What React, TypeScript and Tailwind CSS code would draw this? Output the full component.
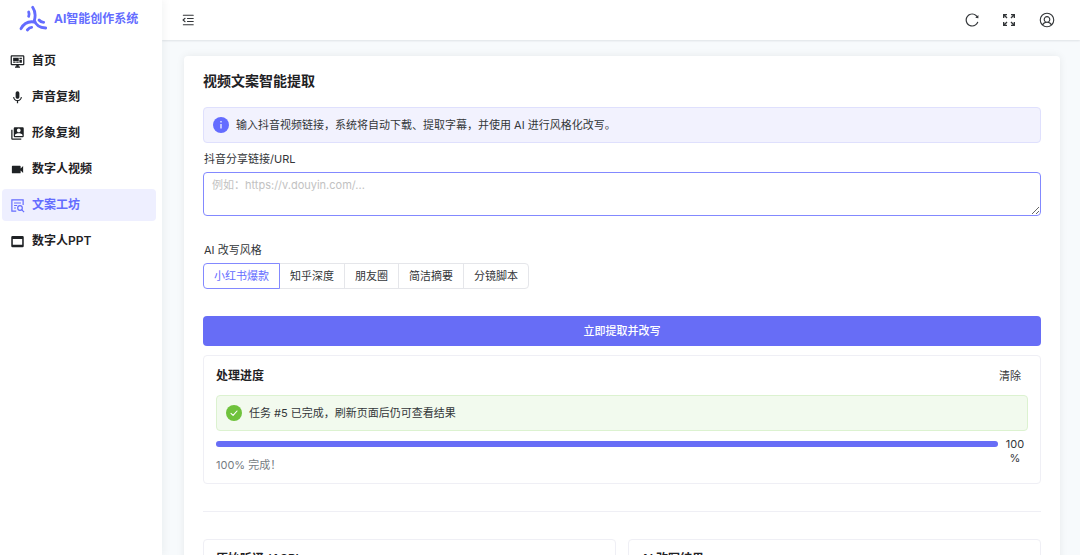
import React, { useState } from 'react';
import { MdMic, MdSwitchAccount, MdVideocam } from 'react-icons/md';
import { AiOutlineReload } from 'react-icons/ai';
import { PiUserCircle } from 'react-icons/pi';
import clsx from 'clsx';

function Logo() {
  return (
    <svg viewBox="0 0 84 84" className="w-7 h-7 shrink-0" fill="none" stroke="#646cff" strokeWidth="8.500" strokeLinecap="round" aria-hidden="true">
      <path d="M41 7c8 12 9 26 5 39 4 13 17 22 34 23" />
      <path d="M46 51C29 48 14 56 6 71" />
      <path d="M29 21c2 5 2 9 0 13" />
      <path d="M60 45c4 5 8 7 14 7" />
      <path d="M25 75c4-5 8-8 13-8" />
    </svg>
  );
}

function MonitorIcon() {
  return (
    <svg viewBox="0 0 24 24" width="15" height="15" fill="currentColor" aria-hidden="true">
      <path d="M21 16V4H3v12h18m0-14a2 2 0 0 1 2 2v12a2 2 0 0 1-2 2h-7v2h2v2H8v-2h2v-2H3a2 2 0 0 1-2-2V4c0-1.110.89-2 2-2h18M5 6h9v5H5V6m10 0h4v2h-4V6m4 3v5h-4V9h4M5 12h4v2H5v-2m5 0h4v2h-4v-2Z" />
    </svg>
  );
}

function DocSearchIcon() {
  return (
    <svg viewBox="0 0 24 24" width="15" height="15" fill="none" stroke="currentColor" strokeWidth="1.900" aria-hidden="true">
      <path d="M10 21H3V3h18v8M6.500 8h11M6.500 12h5M6.500 16h3" />
      <circle cx="16" cy="16" r="3.700" />
      <path d="m18.700 18.700 3.800 3.800" />
    </svg>
  );
}

function WindowIcon() {
  return (
    <svg viewBox="0 0 24 24" width="15" height="15" fill="currentColor" aria-hidden="true">
      <path fillRule="evenodd" d="M4 3h16a2 2 0 0 1 2 2v14a2 2 0 0 1-2 2H4a2 2 0 0 1-2-2V5a2 2 0 0 1 2-2Zm.500 5v9h15V8h-15Z" />
    </svg>
  );
}

function FoldIcon() {
  return (
    <svg viewBox="0 0 24 24" width="14" height="14" fill="none" stroke="currentColor" strokeWidth="1.800" strokeLinecap="round" aria-hidden="true">
      <path d="M4 4h17M11 9.300h10M11 14.700h10M4 20h17M7 9l-3.500 3L7 15" />
    </svg>
  );
}

function FullscreenIcon() {
  return (
    <svg viewBox="0 0 24 24" width="16" height="16" fill="currentColor" aria-hidden="true">
      <path d="M21 3v6h-2V6.410l-3.290 3.300-1.420-1.420L17.590 5H15V3zM3 3v6h2V6.410l3.290 3.300 1.420-1.420L6.410 5H9V3zm18 18v-6h-2v2.590l-3.290-3.290-1.410 1.410L17.590 19H15v2zM9 21v-2H6.410l3.290-3.290-1.410-1.420L5 17.590V15H3v6z" />
    </svg>
  );
}

const menus = [
  { label: '首页', icon: <MonitorIcon /> },
  { label: '声音复刻', icon: <MdMic size={15} /> },
  { label: '形象复刻', icon: <MdSwitchAccount size={15} /> },
  { label: '数字人视频', icon: <MdVideocam size={15} /> },
  { label: '文案工坊', icon: <DocSearchIcon /> },
  { label: '数字人PPT', icon: <WindowIcon /> },
];

const styles = ['小红书爆款', '知乎深度', '朋友圈', '简洁摘要', '分镜脚本'];

interface AlertProps {
  type: 'info' | 'success';
  children: React.ReactNode;
}

function Alert({ type, children }: AlertProps) {
  const isInfo = type === 'info';
  return (
    <div className={clsx('flex items-center gap-[7px] h-9 px-2 rounded border', isInfo ? 'bg-[#f2f2fe] border-[#dfe0fd]' : 'bg-[#f2faee] border-[#dcf2d0]')}>
      <svg viewBox="0 0 16 16" width="16" height="16" className="shrink-0 ml-px" fill="none" stroke="white" aria-hidden="true">
        <circle cx="8" cy="8" r="8" fill={isInfo ? '#646cff' : '#6fc23c'} stroke="none" />
        {isInfo ? (
          <path d="M8 7v4.600M8 4v1.400" strokeWidth="1.200" />
        ) : (
          <path d="m5 8.300 2.100 2L11 6" strokeWidth="1.100" strokeLinecap="round" strokeLinejoin="round" />
        )}
      </svg>
      <p>{children}</p>
    </div>
  );
}

export default function App() {
  const [active, setActive] = useState('文案工坊');
  const [style, setStyle] = useState(styles[0]);
  const [url, setUrl] = useState('');
  const progress = 100;

  return (
    <div className="flex h-screen overflow-hidden bg-[#f7fafc] text-[11px] leading-4 text-[#333639] font-[Inter,'Noto_Sans_CJK_SC',sans-serif]">
      <aside className="w-[162px] shrink-0 bg-white z-10 shadow-[2px_0_8px_rgba(29,35,41,0.05)]">
        <a href="#" className="flex items-center gap-[7px] h-[38px] pl-[19px] text-[#646cff] text-xs font-bold">
          <Logo />
          <span className="whitespace-nowrap">AI智能创作系统</span>
        </a>
        <nav className="flex flex-col gap-1 mt-[7px] pl-0.5 pr-1.5">
          {menus.map((menu) => (
            <a
              key={menu.label}
              href="#"
              onClick={() => setActive(menu.label)}
              aria-current={active === menu.label ? 'page' : undefined}
              className={clsx(
                'flex items-center gap-[7px] h-8 pl-2 rounded text-xs font-semibold',
                active === menu.label ? 'bg-[#eeefff] text-[#646cff]' : 'text-[#1f2225]'
              )}
            >
              {menu.icon}
              <span>{menu.label}</span>
            </a>
          ))}
        </nav>
      </aside>

      <div className="flex-1 min-w-0 flex flex-col">
        <header className="h-10 shrink-0 flex items-center justify-between bg-white pl-[19px] pr-6 shadow-[0_1px_2px_rgba(0,21,41,0.1)]">
          <button aria-label="折叠菜单"><FoldIcon /></button>
          <div className="flex items-center gap-[21px]">
            <button aria-label="刷新"><AiOutlineReload size={16} /></button>
            <button aria-label="全屏"><FullscreenIcon /></button>
            <button aria-label="用户"><PiUserCircle size={18} /></button>
          </div>
        </header>

        <main className="flex-1 overflow-y-auto [scrollbar-width:none] pl-[22px] pr-5 py-4">
          <div className="bg-white rounded shadow-[0_0_8px_rgba(0,0,0,0.07)] px-[19px] pt-[15px] pb-5">
            <h1 className="text-sm leading-5 font-semibold text-[#1f2225] mb-4">视频文案智能提取</h1>

            <Alert type="info">输入抖音视频链接，系统将自动下载、提取字幕，并使用 AI 进行风格化改写。</Alert>

            <label htmlFor="url" className="block mt-2 mb-[5px] pl-px">抖音分享链接/URL</label>
            <textarea
              id="url"
              value={url}
              onChange={(e) => setUrl(e.target.value)}
              placeholder="例如：https://v.douyin.com/..."
              className="block w-full h-11 px-2 py-1 rounded border border-[#8389ff] outline-none placeholder:text-[#c2c2c2]"
            />

            <fieldset className="mt-[26px]">
              <legend className="pl-px mb-[5px]">AI 改写风格</legend>
              <div className="flex">
                {styles.map((item) => (
                  <label
                    key={item}
                    className={clsx(
                      'flex items-center h-[26px] px-2.5 border -ml-px first:ml-0 first:rounded-l last:rounded-r cursor-pointer',
                      style === item ? 'relative border-[#8389ff] text-[#646cff]' : 'border-[#e5e6ea]'
                    )}
                  >
                    <input type="radio" name="style" className="sr-only" checked={style === item} onChange={() => setStyle(item)} />
                    {item}
                  </label>
                ))}
              </div>
            </fieldset>

            <button className="w-full h-[30px] mt-[27px] rounded bg-[#676df6] text-white font-medium">立即提取并改写</button>

            <section className="mt-[9px] px-3 pt-3 pb-2.5 rounded border border-[#efeff5]">
              <div className="flex items-center justify-between mb-[11px]">
                <h2 className="text-xs leading-4 font-semibold text-[#1f2225]">处理进度</h2>
                <button className="px-[7px]">清除</button>
              </div>
              <Alert type="success">任务 #5 已完成，刷新页面后仍可查看结果</Alert>
              <div className="flex items-start mt-1.5">
                <div className="flex-1 mt-1 h-1.5 rounded-full bg-[#ededf5]" role="progressbar" aria-valuenow={progress} aria-label="处理进度">
                  <div className="h-full rounded-full bg-[#676df6]" style={{ width: `${progress}%` }} />
                </div>
                <div className="w-[30px] pl-1 text-center leading-[14px]">
                  {progress}
                  <br />%
                </div>
              </div>
              <p className="-mt-2 text-[#767c82]">100% 完成！</p>
            </section>

            <hr className="my-[27px] border-[#efeff5]" />

            <div className="grid grid-cols-2 gap-3">
              <section className="min-h-40 px-3 pt-[11px] rounded border border-[#efeff5]">
                <h2 className="text-xs leading-4 font-semibold text-[#1f2225]">原始听译 (ASR)</h2>
              </section>
              <section className="min-h-40 px-3 pt-[11px] rounded border border-[#efeff5]">
                <h2 className="text-xs leading-4 font-semibold text-[#1f2225]">AI 改写结果</h2>
              </section>
            </div>
          </div>
        </main>
      </div>
    </div>
  );
}
